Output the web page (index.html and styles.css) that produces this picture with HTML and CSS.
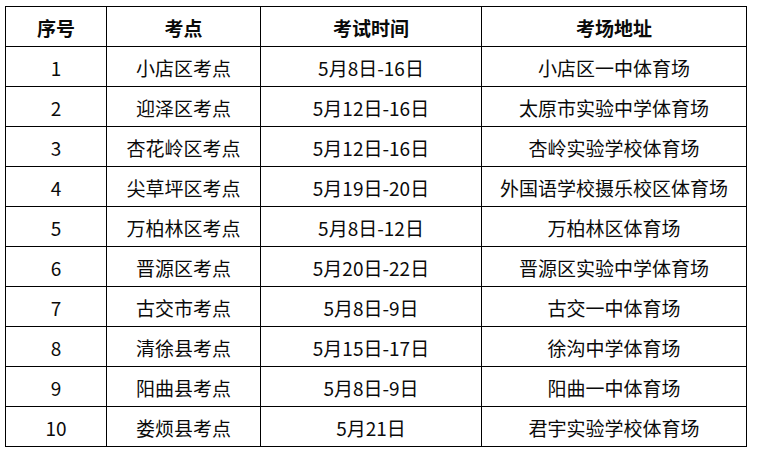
FILE: index.html
```
<!DOCTYPE html>
<html lang="zh">
<head>
<meta charset="utf-8">
<link rel="stylesheet" href="styles.css">
</head>
<body>
<table class="exam">
<colgroup><col class="c1"><col class="c2"><col class="c3"><col class="c4"></colgroup>
<thead>
<tr><th>序号</th><th>考点</th><th>考试时间</th><th>考场地址</th></tr>
</thead>
<tbody>
<tr><td>1</td><td>小店区考点</td><td>5月8日-16日</td><td>小店区一中体育场</td></tr>
<tr><td>2</td><td>迎泽区考点</td><td>5月12日-16日</td><td>太原市实验中学体育场</td></tr>
<tr><td>3</td><td>杏花岭区考点</td><td>5月12日-16日</td><td>杏岭实验学校体育场</td></tr>
<tr><td>4</td><td>尖草坪区考点</td><td>5月19日-20日</td><td>外国语学校摄乐校区体育场</td></tr>
<tr><td>5</td><td>万柏林区考点</td><td>5月8日-12日</td><td>万柏林区体育场</td></tr>
<tr><td>6</td><td>晋源区考点</td><td>5月20日-22日</td><td>晋源区实验中学体育场</td></tr>
<tr><td>7</td><td>古交市考点</td><td>5月8日-9日</td><td>古交一中体育场</td></tr>
<tr><td>8</td><td>清徐县考点</td><td>5月15日-17日</td><td>徐沟中学体育场</td></tr>
<tr><td>9</td><td>阳曲县考点</td><td>5月8日-9日</td><td>阳曲一中体育场</td></tr>
<tr><td>10</td><td>娄烦县考点</td><td>5月21日</td><td>君宇实验学校体育场</td></tr>
</tbody>
</table>
</body>
</html>
```
FILE: styles.css
```
html, body {
  margin: 0;
  padding: 0;
  background: #ffffff;
}
body {
  padding: 6px 0 0 5px;
  font-family: "Noto Sans CJK SC", "Noto Sans", sans-serif;
  color: #0a0a0a;
}
.exam {
  border-collapse: collapse;
  table-layout: fixed;
  width: 741px;
  font-size: 19px;
}
.c1 { width: 101px; }
.c2 { width: 154px; }
.c3 { width: 221px; }
.c4 { width: 265px; }
.exam th, .exam td {
  border: 1px solid #000000;
  height: 37px;
  padding: 2px 0 0 0;
  text-align: center;
  vertical-align: middle;
  line-height: 1;
  white-space: nowrap;
}
.exam th {
  font-weight: bold;
}
.exam td {
  font-weight: normal;
}
```
